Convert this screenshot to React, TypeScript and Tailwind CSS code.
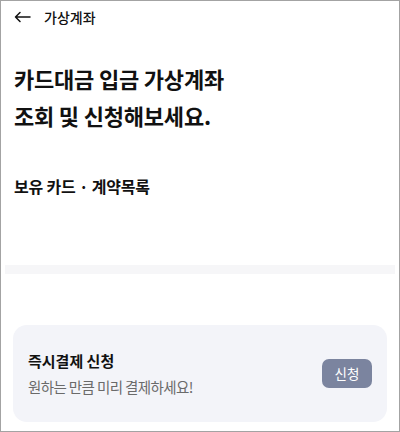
import React from "react";

export default function App() {
  return (
    <div
      className="w-[400px] h-[432px] border border-[#a3a3a3] bg-white overflow-hidden text-[#111]"
      style={{ fontFamily: '"Noto Sans CJK KR", "Noto Sans", sans-serif' }}
    >
      <div className="flex items-center h-[32px] pl-[13px]">
        <svg width="17" height="12" viewBox="0 0 17 12" fill="none" stroke="#111" strokeWidth="1.5" strokeLinecap="round" strokeLinejoin="round">
          <path d="M16 6H1.5M6 1.5L1.5 6L6 10.5" />
        </svg>
        <span className="ml-[13px] text-[14px] font-medium leading-none">가상계좌</span>
      </div>
      <div className="pl-[13px] mt-[27px] text-[22px] font-bold leading-[37px] tracking-[-0.2px]">
        <div>카드대금 입금 가상계좌</div>
        <div>조회 및 신청해보세요.</div>
      </div>
      <div className="pl-[13px] mt-[42px] text-[16px] font-bold leading-[20px] tracking-[-0.2px]">보유 카드 · 계약목록</div>
      <div className="mt-[69px] h-[9px] bg-[#f6f6f8] mx-[4px]" />
      <div className="mt-[51px] mx-[12px] h-[97px] rounded-[14px] bg-[#f3f4f9] flex items-center justify-between pl-[15px] pr-[15px]">
        <div className="flex flex-col">
          <span className="text-[15px] font-bold leading-[20px]">즉시결제 신청</span>
          <span className="text-[14.5px] text-[#6a6a6a] leading-[18px] mt-[7px] tracking-[-0.6px]">원하는 만큼 미리 결제하세요!</span>
        </div>
        <button className="w-[50px] h-[29px] rounded-[7px] bg-[#7b849f] text-white text-[13.5px] font-normal">신청</button>
      </div>
    </div>
  );
}
